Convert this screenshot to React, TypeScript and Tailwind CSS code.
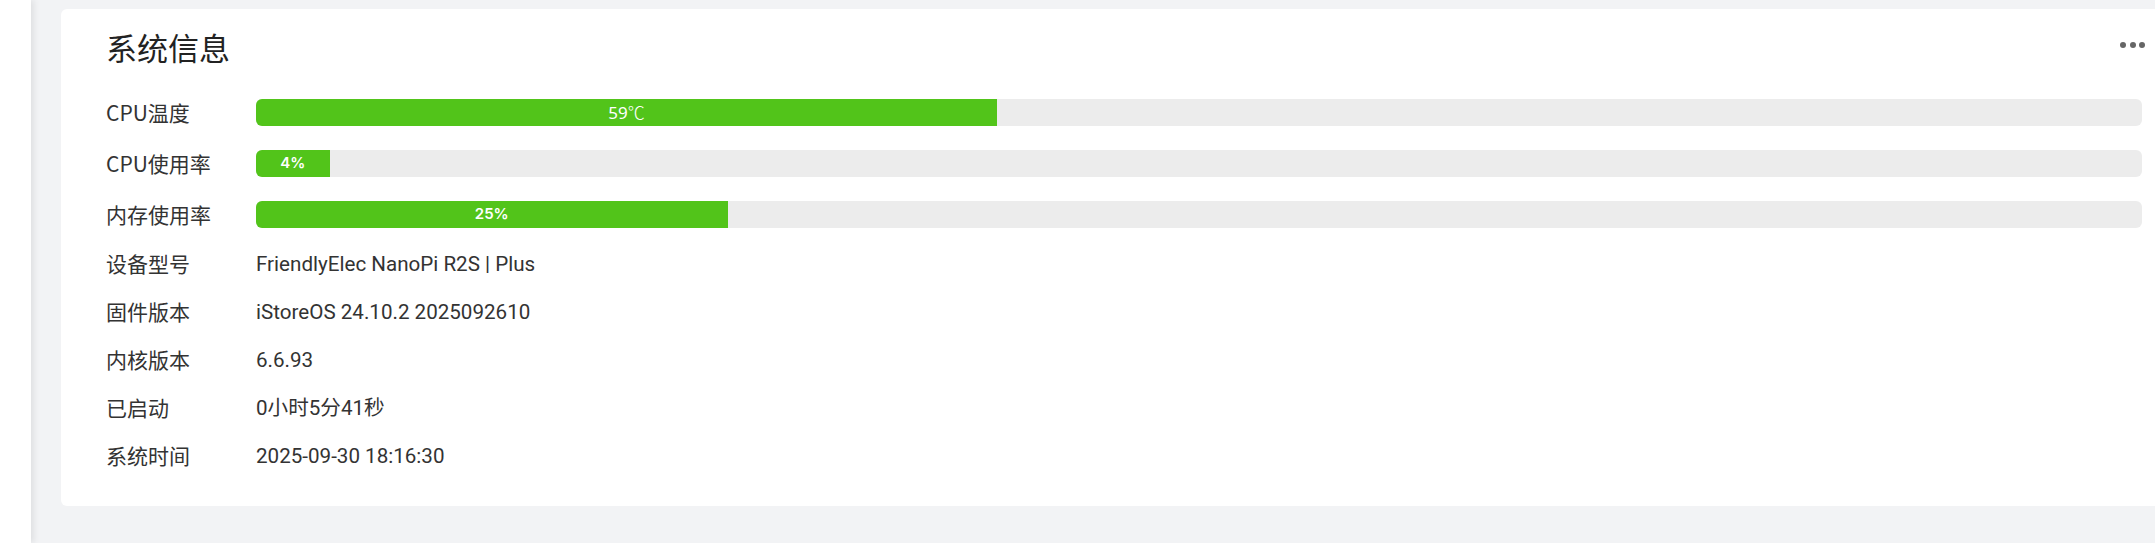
import React from 'react';

const cjk = "font-['Noto_Sans_CJK_SC',sans-serif]";
const latin = "font-['Roboto','Noto_Sans_CJK_SC',sans-serif]";

type BarRow = { label: string; text: React.ReactNode; pct: number; bold?: boolean };

const bars: BarRow[] = [
  {
    label: 'CPU温度',
    text: (
      <>
        59<span className="font-['Noto_Sans_CJK_SC',sans-serif] font-light">℃</span>
      </>
    ),
    pct: 39.3,
  },
  { label: 'CPU使用率', text: '4%', pct: 3.9, bold: true },
  { label: '内存使用率', text: '25%', pct: 25, bold: true },
];

const infos: [string, string][] = [
  ['设备型号', 'FriendlyElec NanoPi R2S | Plus'],
  ['固件版本', 'iStoreOS 24.10.2 2025092610'],
  ['内核版本', '6.6.93'],
  ['已启动', '0小时5分41秒'],
  ['系统时间', '2025-09-30 18:16:30'],
];

const App: React.FC = () => {
  return (
    <div className="flex h-[543px] w-full overflow-hidden bg-[#f2f3f5]">
      {/* Sidebar edge */}
      <div className="w-[31px] shrink-0 bg-white shadow-[3px_0_6px_rgba(0,0,0,0.08)] z-10" />

      <div className="flex-1 pl-[30px] pt-[9px]">
        <div className="rounded-l-[6px] bg-white pb-[26px]">
          {/* Header */}
          <div className="flex h-[78px] items-start justify-between pl-[45px] pr-[10px]">
            <h2 className={`${cjk} mt-[16px] text-[31px] leading-[44px] text-[#222]`}>系统信息</h2>
            <div className="mt-[33px] flex gap-[3.5px]">
              <span className="h-[6px] w-[6px] rounded-full bg-[#666]" />
              <span className="h-[6px] w-[6px] rounded-full bg-[#666]" />
              <span className="h-[6px] w-[6px] rounded-full bg-[#666]" />
            </div>
          </div>

          {/* Progress rows */}
          {bars.map((b) => (
            <div key={b.label} className="flex h-[51px] items-center pl-[45px] pr-[13px]">
              <div className={`${cjk} w-[150px] shrink-0 text-[21px] text-[#333]`}>{b.label}</div>
              <div className="h-[27px] flex-1 overflow-hidden rounded-[6px] bg-[#ececec]">
                <div
                  className="flex h-full items-center justify-center bg-[#52c41a]"
                  style={{ width: `${b.pct}%` }}
                >
                  <span
                    className={`${b.bold ? "font-['Inter',sans-serif] font-semibold text-[15px]" : "font-['Noto_Sans','Noto_Sans_CJK_SC',sans-serif] text-[17px]"} whitespace-nowrap text-white`}
                  >
                    {b.text}
                  </span>
                </div>
              </div>
            </div>
          ))}

          {/* Info rows */}
          {infos.map(([k, v]) => (
            <div key={k} className="flex h-[48px] items-center pl-[45px] pr-[13px]">
              <div className={`${cjk} w-[150px] shrink-0 text-[21px] text-[#333]`}>{k}</div>
              <div className={`${latin} text-[20.6px] text-[#333]`}>{v}</div>
            </div>
          ))}
        </div>
      </div>
    </div>
  );
};

export default App;
